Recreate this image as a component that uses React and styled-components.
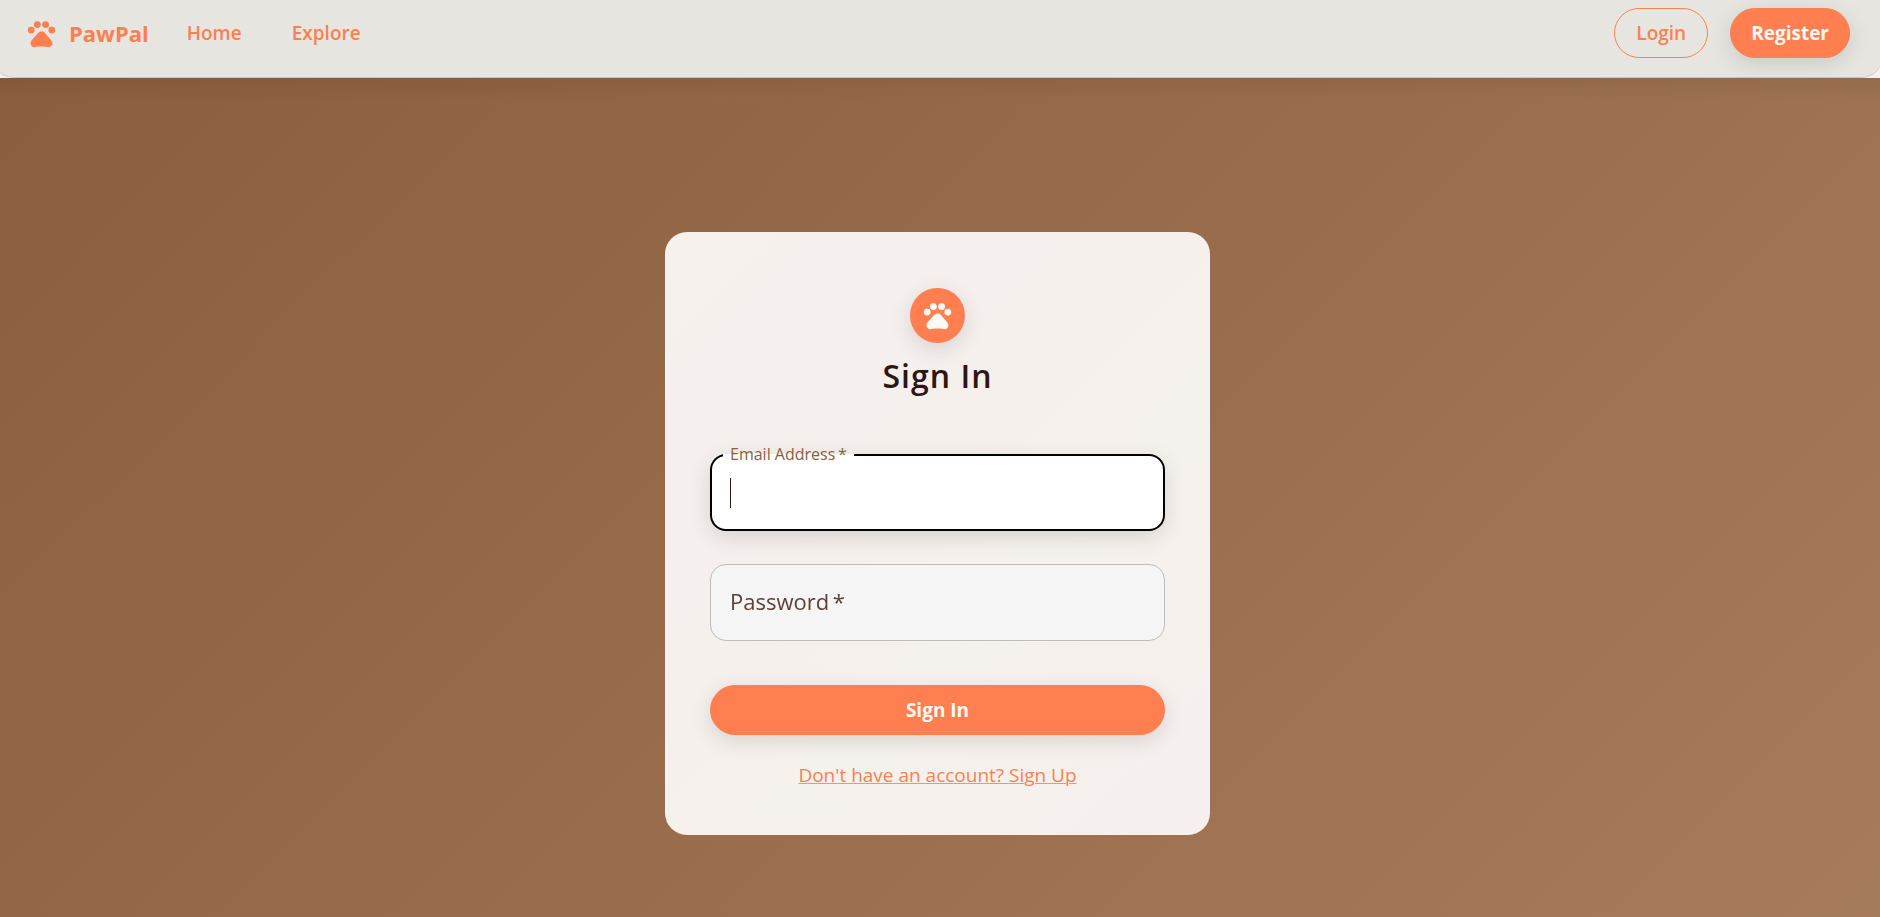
import React from "react";
import styled, { createGlobalStyle, css } from "styled-components";
import { MdPets } from "react-icons/md";

const GlobalStyle = createGlobalStyle`
  *, *::before, *::after { box-sizing: border-box; }
  body {
    margin: 0;
    background: #f5f0ee;
    color: #2c1810;
    font-family: "Open Sans", "Noto Sans", sans-serif;
    overflow-x: hidden;
  }
`;

const Page = styled.div`
  min-height: 100vh;
  display: flex;
  flex-direction: column;
  overflow: hidden;
`;

const Header = styled.header`
  height: 78px;
  margin: 0 -3px 0 -8px;
  padding: 8px 33px 0;
  display: flex;
  align-items: flex-start;
  justify-content: space-between;
  background: #e7e5e0;
  border-bottom: 1px solid #c9c4be;
  border-radius: 0 0 22px 22px;
`;

const Nav = styled.nav`
  height: 50px;
  display: flex;
  align-items: center;
`;

const Brand = styled.a`
  display: flex;
  align-items: center;
  gap: 11px;
  margin-right: 38px;
  color: #ff7f50;
  font-size: 22px;
  line-height: 28px;
  font-weight: 700;
  text-decoration: none;
`;

const NavLink = styled.a`
  margin-right: 50px;
  color: #ff7f50;
  font-size: 19px;
  font-weight: 600;
  text-decoration: none;
`;

const Actions = styled.div`
  display: flex;
  gap: 22px;
`;

const Button = styled.button`
  height: 50px;
  padding: 0 21px;
  border: 1px solid #ff7f50;
  border-radius: 28px;
  font-family: inherit;
  font-size: 19px;
  font-weight: 600;
  cursor: pointer;
  ${({ $filled }) =>
    $filled
      ? css`
          padding: 0 20px;
          background: #ff7f50;
          color: #fff8f3;
          font-weight: 700;
          box-shadow: 0 6px 22px rgba(0, 0, 0, 0.12);
        `
      : css`
          background: transparent;
          color: #ff7f50;
        `}
`;

const Main = styled.main`
  flex: 1;
  display: flex;
  align-items: center;
  justify-content: center;
  padding: 71px 5px 0 0;
  background:
    linear-gradient(rgba(0, 0, 0, 0.06), transparent 22px),
    linear-gradient(135deg, #8b5e3c 0%, #a67b5b 100%);
`;

const Card = styled.form`
  width: 545px;
  max-width: 100%;
  padding: 56px 45px 46px;
  display: flex;
  flex-direction: column;
  align-items: center;
  border-radius: 22px;
  background: linear-gradient(135deg, #f5f1ed 0%, #f5efed 30%, #f5f1ec 60%, #f5f0ee 100%);
`;

const Avatar = styled.div`
  width: 55px;
  height: 55px;
  display: grid;
  place-items: center;
  border-radius: 50%;
  background: #ff7f50;
  color: #fff8f3;
  box-shadow: 0 6px 22px rgba(0, 0, 0, 0.12);
`;

const Title = styled.h1`
  margin: 11px 0 56px;
  font-size: 32px;
  line-height: 44px;
  font-weight: 600;
  letter-spacing: 1px;
`;

const Field = styled.div`
  position: relative;
  width: 100%;
  margin-bottom: 33px;
`;

const Input = styled.input`
  display: block;
  width: 100%;
  height: 77px;
  padding: 0 19px;
  border: 1px solid #bdbdbd;
  border-radius: 16px;
  background: #f5f5f5;
  color: #2c1810;
  caret-color: transparent;
  font-family: inherit;
  font-size: 22px;
  outline: none;
  &:not(:placeholder-shown) {
    caret-color: #2c1810;
  }
  &:focus {
    padding: 0 18px;
    border: 2px solid #000;
    background: #fff;
    box-shadow: 0 6px 22px rgba(0, 0, 0, 0.12);
  }
`;

const Label = styled.label`
  position: absolute;
  left: 20px;
  top: 21px;
  color: #5d4037;
  font-size: 22px;
  line-height: 33px;
  pointer-events: none;
  ${Input}:focus + &,
  ${Input}:not(:placeholder-shown) + & {
    left: 13px;
    top: 0;
    height: 3px;
    padding: 0 7px;
    background: #fff;
    color: #8b5e3c;
    font-size: 16px;
    line-height: 0;
  }
`;

const Caret = styled.span`
  display: none;
  position: absolute;
  left: 20px;
  top: 24px;
  width: 1px;
  height: 30px;
  background: #2c1810;
  pointer-events: none;
  ${Input}:focus:placeholder-shown ~ & {
    display: block;
  }
`;

const Submit = styled(Button)`
  width: 100%;
  margin-top: 11px;
`;

const SignUp = styled.a`
  margin-top: 26px;
  color: #ff7f50;
  font-size: 19px;
  line-height: 28px;
  text-decoration: underline 1px rgba(139, 94, 60, 0.5);
`;

function TextField({ id, label, ...props }) {
  return (
    <Field>
      <Input id={id} placeholder=" " required {...props} />
      <Label htmlFor={id}>{label}&#8201;*</Label>
      <Caret aria-hidden="true" />
    </Field>
  );
}

export default function App() {
  return (
    <Page>
      <GlobalStyle />
      <Header>
        <Nav>
          <Brand href="#">
            <MdPets size={33} />
            PawPal
          </Brand>
          <NavLink href="#home">Home</NavLink>
          <NavLink href="#explore">Explore</NavLink>
        </Nav>
        <Actions>
          <Button type="button">Login</Button>
          <Button type="button" $filled>Register</Button>
        </Actions>
      </Header>
      <Main>
        <Card onSubmit={(event) => event.preventDefault()}>
          <Avatar>
            <MdPets size={33} />
          </Avatar>
          <Title>Sign In</Title>
          <TextField id="email" label="Email Address" type="email" autoFocus />
          <TextField id="password" label="Password" type="password" />
          <Submit type="submit" $filled>Sign In</Submit>
          <SignUp href="#signup">Don't have an account? Sign Up</SignUp>
        </Card>
      </Main>
    </Page>
  );
}
